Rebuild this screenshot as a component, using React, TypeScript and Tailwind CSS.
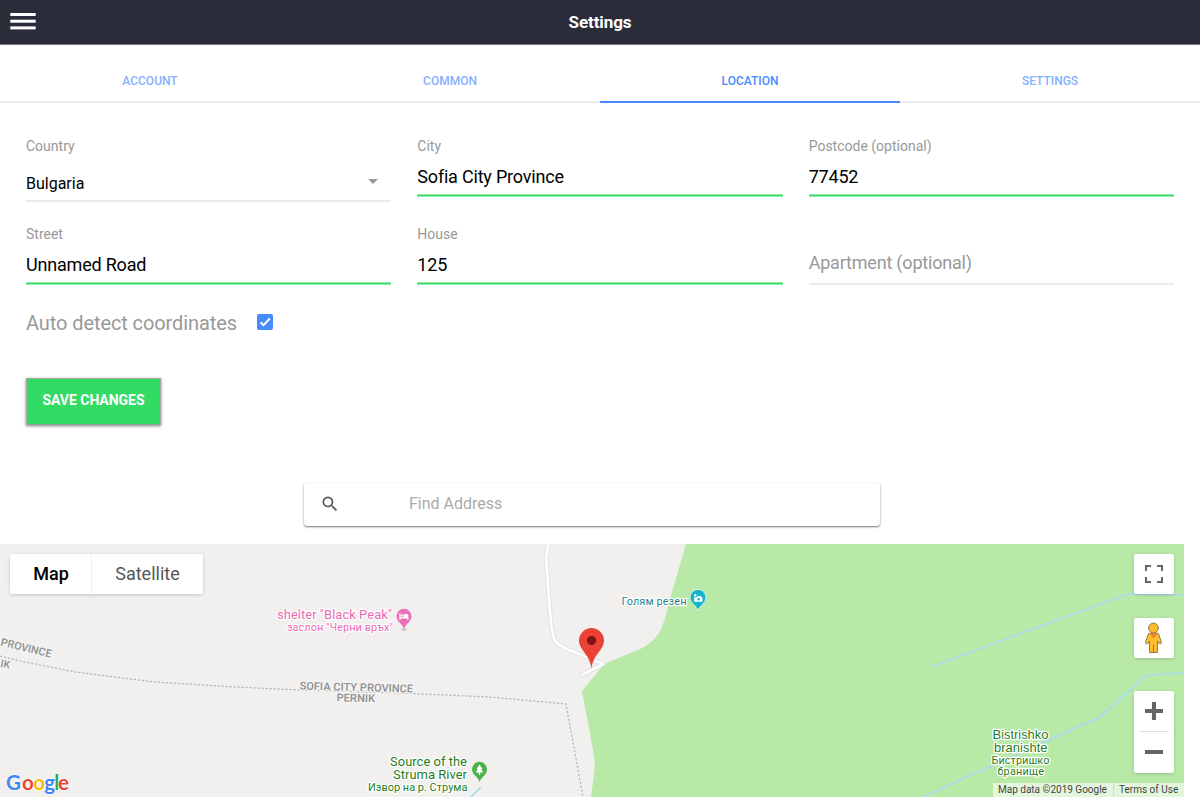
import type { ReactNode } from "react";
import { MdSearch } from "react-icons/md";

const tabs = ["ACCOUNT", "COMMON", "LOCATION", "SETTINGS"];

function Field({ label, value }: { label: string; value: string }) {
  return (
    <label className="flex h-[88px] flex-col">
      <span className="h-[18px] text-[14px] leading-[18px] text-[#999]">{label}</span>
      <span className="mt-[10px] h-6 text-[18px] leading-6 tracking-[-0.2px] text-black">{value}</span>
      <span className="mt-[5px] h-[3px] border-y border-[#98eeb0] bg-[#32db64]" />
    </label>
  );
}

function MapButton({ label, children }: { label: string; children: ReactNode }) {
  return (
    <button
      aria-label={label}
      className="flex h-10 w-10 items-center justify-center rounded-[2px] bg-white shadow-[0_1px_4px_-1px_rgba(0,0,0,0.3)]"
    >
      {children}
    </button>
  );
}

function MapCanvas() {
  return (
    <svg className="block h-[253px] w-[1184px]" viewBox="0 544 1184 253" fontFamily="Roboto, sans-serif">
      <rect y="544" width="1184" height="253" fill="#f1f0ef" />
      <path
        d="M686 544 L672 592 L665 618 Q662 628 659 633 Q652 644 638 650 L604 664 L582 691 L593 750 Q595 760 594.500 770 L591 797 H1184 V544 Z"
        fill="#b9e9a7"
      />
      <g fill="none" stroke="#a9daf0" strokeWidth="1.700">
        <path d="M931 667 L1000 641 L1128 594 L1184 595" />
        <path d="M923 797 L1000 762 L1100 717 L1147 675 L1184 673" />
        <path d="M481 787 L470 798" />
      </g>
      <g fill="none" strokeLinejoin="round" strokeLinecap="round">
        <path d="M549 542 L546 557 L550 612 Q552 636 555 641 Q562 648 572 651 L603 664 L582 675" stroke="#dedfe0" strokeWidth="4.500" />
        <path d="M549 542 L546 557 L550 612 Q552 636 555 641 Q562 648 572 651 L603 664 L582 675" stroke="#fff" strokeWidth="2.800" />
      </g>
      <g fill="none" stroke="#aeb3b3" strokeWidth="1.200" strokeDasharray="2.200 1.800">
        <path d="M0 656 L20 661 L75 672 L155 682 L235 687 L300 690 L400 693 L490 697 L566 704 L583 797" />
      </g>

      <g fill="#949494" fontWeight="600" stroke="#f8f8f8" strokeWidth="2" paintOrder="stroke" fontSize="11">
        <text x="0" y="645.500" textLength="52" lengthAdjust="spacingAndGlyphs" transform="rotate(13.500 0 645.500)">PROVINCE</text>
        <text x="0" y="667" textLength="9.500" lengthAdjust="spacingAndGlyphs" transform="rotate(10 0 667)">IK</text>
        <text x="299.500" y="689.500" textLength="113.500" lengthAdjust="spacingAndGlyphs" transform="rotate(1.500 299 689)">SOFIA CITY PROVINCE</text>
        <text x="336.500" y="701.300" textLength="38.500" lengthAdjust="spacingAndGlyphs" transform="rotate(1.500 337 701)">PERNIK</text>
      </g>

      <g stroke="#fff" strokeWidth="2.500" paintOrder="stroke" strokeLinejoin="round">
        <g fill="#ee69b4">
          <text x="277" y="619.400" fontSize="13" textLength="115">shelter "Black Peak"</text>
          <text x="287" y="631" fontSize="11" textLength="106">заслон "Черни връх"</text>
        </g>
        <text x="621.500" y="605" fontSize="11" textLength="65" fill="#258491">Голям резен</text>
        <g fill="#1e7d22">
          <text x="390" y="765.900" fontSize="13" textLength="77">Source of the</text>
          <text x="393" y="778.900" fontSize="13" textLength="74">Struma River</text>
          <text x="368" y="790.500" fontSize="11" textLength="99.500">Извор на р. Струма</text>
          <text x="992.500" y="739" fontSize="13" textLength="56" fontFamily="Liberation Sans, sans-serif">Bistrishko</text>
          <text x="994" y="752" fontSize="13" textLength="53.500" fontFamily="Liberation Sans, sans-serif">branishte</text>
          <text x="991.500" y="764" fontSize="11" textLength="58">Бистришко</text>
          <text x="997.500" y="775" fontSize="11" textLength="46.500">бранище</text>
        </g>
      </g>

      <ellipse cx="404" cy="629.500" rx="3" ry="1.200" fill="#c8c6c7" />
      <path d="M404 629.500 C403 624 396.500 622 396.500 616.300 A7.500 7.500 0 0 1 411.500 616.300 C411.500 622 405 624 404 629.500Z" fill="#ec70b8" />
      <path d="M399.400 613.300h1.200v3.600h7.800v3h-1.100v-1.300h-6.700v1.300h-1.200Z M403.600 614h3.400q1.400 0 1.400 1.500v1.500h-4.800Z" fill="#fff" />
      <circle cx="402" cy="615.600" r="1.100" fill="#fff" />

      <path d="M698 611 C697 605.500 690 603.500 690 597.400 A8 8 0 0 1 706 597.400 C706 603.500 699 605.500 698 611Z" fill="#14b4cc" stroke="#d8f2df" strokeWidth="1" />
      <path d="M694.200 597.300h2.400l1-1.300h3l.800 1.300h1v4.500h-8.200Z" fill="#fff" />
      <circle cx="698.700" cy="599.300" r="1.300" fill="#14b4cc" />
      <circle cx="695.200" cy="595.200" r="1.200" fill="#fff" />

      <path d="M479.700 782.500 C479 777 472 775.500 472 769.300 A7.500 7.500 0 0 1 487 769.300 C487 775.500 480.500 777 479.700 782.500Z" fill="#4ab348" />
      <path d="M479.500 764.500 L476.500 769 H477.700 L475.700 772.500 H478.800 V775 H480.200 V772.500 H483.300 L481.300 769 H482.500Z" fill="#fff" />

      <path d="M591.500 669 C590.500 655 579 650 579 640.500 A12.500 12.500 0 0 1 604 640.500 C604 650 592.500 655 591.500 669Z" fill="#ea4335" />
      <circle cx="591.500" cy="640.500" r="4.600" fill="#7f1410" />

      <text x="6 22 33.200 44.200 54.300 58" y="789.500" fontSize="20.500" fontWeight="700" fontFamily="Lato, sans-serif" stroke="#fff" strokeWidth="1.200" paintOrder="stroke">
        <tspan fill="#4285f4">G</tspan><tspan fill="#ea4335">o</tspan><tspan fill="#fbbc05">o</tspan><tspan fill="#4285f4">g</tspan><tspan fill="#34a853">l</tspan><tspan fill="#ea4335">e</tspan>
      </text>
    </svg>
  );
}

export default function App() {
  return (
    <div className="flex h-[800px] w-[1200px] flex-col overflow-hidden bg-white font-[Roboto,sans-serif]">
      <header className="grid h-[45px] shrink-0 grid-cols-[1fr_auto_1fr] items-center border-b border-[#777881] bg-[#2b2c39] text-white">
        <button aria-label="Menu" className="ml-[6px] flex h-[34px] w-[34px] items-center justify-center">
          <svg viewBox="0 0 34 34" className="h-[34px] w-[34px]" fill="#fff">
            <rect x="4.300" y="8" width="25.400" height="3" />
            <rect x="4.300" y="14.700" width="25.400" height="3" />
            <rect x="4.300" y="21.400" width="25.400" height="3" />
          </svg>
        </button>
        <h1 className="text-[17px] font-bold leading-6 tracking-[-0.08px]">Settings</h1>
      </header>

      <nav className="grid h-[59px] shrink-0 grid-cols-4">
        {tabs.map((tab) => {
          const active = tab === "LOCATION";
          return (
            <button
              key={tab}
              className={
                active
                  ? "flex h-[58px] items-center justify-center border-b-2 border-[#488aff] pt-4 text-[12px] font-medium text-[#488aff]"
                  : "flex h-[58px] items-center justify-center border-b-2 border-[#ededed] pt-4 text-[12px] font-medium text-[#85b1ff]"
              }
            >
              {tab}
            </button>
          );
        })}
      </nav>

      <main className="flex flex-col">
        <div className="grid grid-cols-3 gap-x-[26px] px-[26px] pt-[33px]">
          <div className="flex h-[88px] flex-col">
            <span className="h-[18px] text-[14px] leading-[18px] text-[#999]">Country</span>
            <div className="mt-[17px] flex h-6 items-center justify-between pr-[13px] text-[16px] leading-6 text-black">
              <span>Bulgaria</span>
              <svg viewBox="0 0 10 5" className="mb-[5px] h-[5px] w-[10px]" fill="#999">
                <path d="M0 0H10L5 5Z" />
              </svg>
            </div>
            <span className="mt-1 h-[2px] bg-[#ebebeb]" />
          </div>
          <Field label="City" value="Sofia City Province" />
          <Field label="Postcode (optional)" value="77452" />
          <Field label="Street" value="Unnamed Road" />
          <Field label="House" value="125" />
          <div className="flex h-[88px] flex-col pt-[26px]">
            <span className="h-6 text-[18px] leading-6 tracking-[-0.2px] text-[#999]">Apartment (optional)</span>
            <span className="mt-2 h-[2px] bg-[#ebebeb]" />
          </div>
        </div>

        <div className="flex h-5 items-center gap-5 px-[26px]">
          <span className="text-[20px] leading-6 tracking-[-0.09px] text-[#999]">Auto detect coordinates</span>
          <span className="mb-[2px] flex h-4 w-4 items-center justify-center rounded-[2px] bg-[#488aff]">
            <svg viewBox="0 0 16 16" className="h-4 w-4" fill="none" stroke="#fff" strokeWidth="2">
              <path d="M3.500 8.300L6.500 11.200L12.800 4.500" />
            </svg>
          </span>
        </div>

        <button className="ml-[26px] mt-[45px] flex h-[47px] w-[135px] items-center justify-center border border-[#9fae9f] border-b-[#8fa293] bg-[#32db64] pb-[2px] text-[14px] font-bold tracking-[-0.03px] text-white shadow-[0_1px_3px_rgba(0,0,0,0.5)]">
          SAVE CHANGES
        </button>

        <div className="ml-[304px] mt-[58px] flex h-[43px] w-[576px] items-center rounded-[3px] bg-white shadow-[0_1px_2px_rgba(0,0,0,0.55)]">
          <MdSearch className="mb-px ml-4 h-5 w-5 text-[#555]" />
          <span className="mb-px ml-[69px] text-[16px] leading-6 text-[#aaa]">Find Address</span>
        </div>

        <section className="relative mt-[18px] h-[253px] w-[1184px] overflow-hidden">
          <MapCanvas />
          <div className="absolute left-[10px] top-[10px] flex h-10 rounded-[2px] bg-white text-[18px] shadow-[0_1px_4px_-1px_rgba(0,0,0,0.3)]">
            <button className="w-[82px] border-r border-[#eee] pb-px pl-px font-medium text-black">Map</button>
            <button className="w-[111px] pb-px text-[#565656]">Satellite</button>
          </div>
          <div className="absolute right-[10px] top-[10px] flex flex-col">
            <MapButton label="Toggle fullscreen">
              <svg viewBox="0 0 18 18" className="h-[18px] w-[18px]" fill="none" stroke="#666" strokeWidth="2">
                <path d="M1 6V1H6M12 1H17V6M17 12V17H12M6 17H1V12" />
              </svg>
            </MapButton>
            <div className="mt-6">
              <MapButton label="Street View">
                <svg viewBox="0 0 20 32" className="h-8 w-5" fill="#fdbd2d" stroke="#80734e" strokeWidth="0.9">
                  <path d="M4.500 11.500 L1.500 20.500 Q1.500 22 3.500 22 L5.500 19 V30.500 H13.500 V19 L15.500 22 Q17.500 22 17.500 20.500 L14.500 11.500 Q9.500 9.500 4.500 11.500Z" />
                  <path d="M5.500 11.300 H13.500 L9.500 16.500Z" fill="#e98132" stroke="none" />
                  <path d="M9.500 22.500V30.500" />
                  <circle cx="9.500" cy="6" r="4.900" />
                </svg>
              </MapButton>
            </div>
            <div className="mt-[33px] flex h-[82px] w-10 flex-col items-center rounded-[2px] bg-white shadow-[0_1px_4px_-1px_rgba(0,0,0,0.3)]">
              <button aria-label="Zoom in" className="flex h-10 items-center">
                <svg viewBox="0 0 18 18" className="h-[18px] w-[18px]" fill="#666">
                  <path d="M7 0H11V7H18V11H11V18H7V11H0V7H7Z" />
                </svg>
              </button>
              <span className="h-px w-[30px] bg-[#e0e0e0]" />
              <button aria-label="Zoom out" className="flex h-10 items-center">
                <svg viewBox="0 0 18 4" className="h-1 w-[18px]" fill="#666">
                  <path d="M0 0H18V4H0Z" />
                </svg>
              </button>
            </div>
          </div>
          <div className="absolute bottom-0 right-0 flex h-[14px] text-[10px] leading-[14px] text-[#444]">
            <span className="w-[120px] bg-white/60 pl-[5px]">Map data ©2019 Google</span>
            <span className="ml-px w-[70px] bg-white/60 pl-[5px]">Terms of Use</span>
          </div>
        </section>
      </main>
    </div>
  );
}
